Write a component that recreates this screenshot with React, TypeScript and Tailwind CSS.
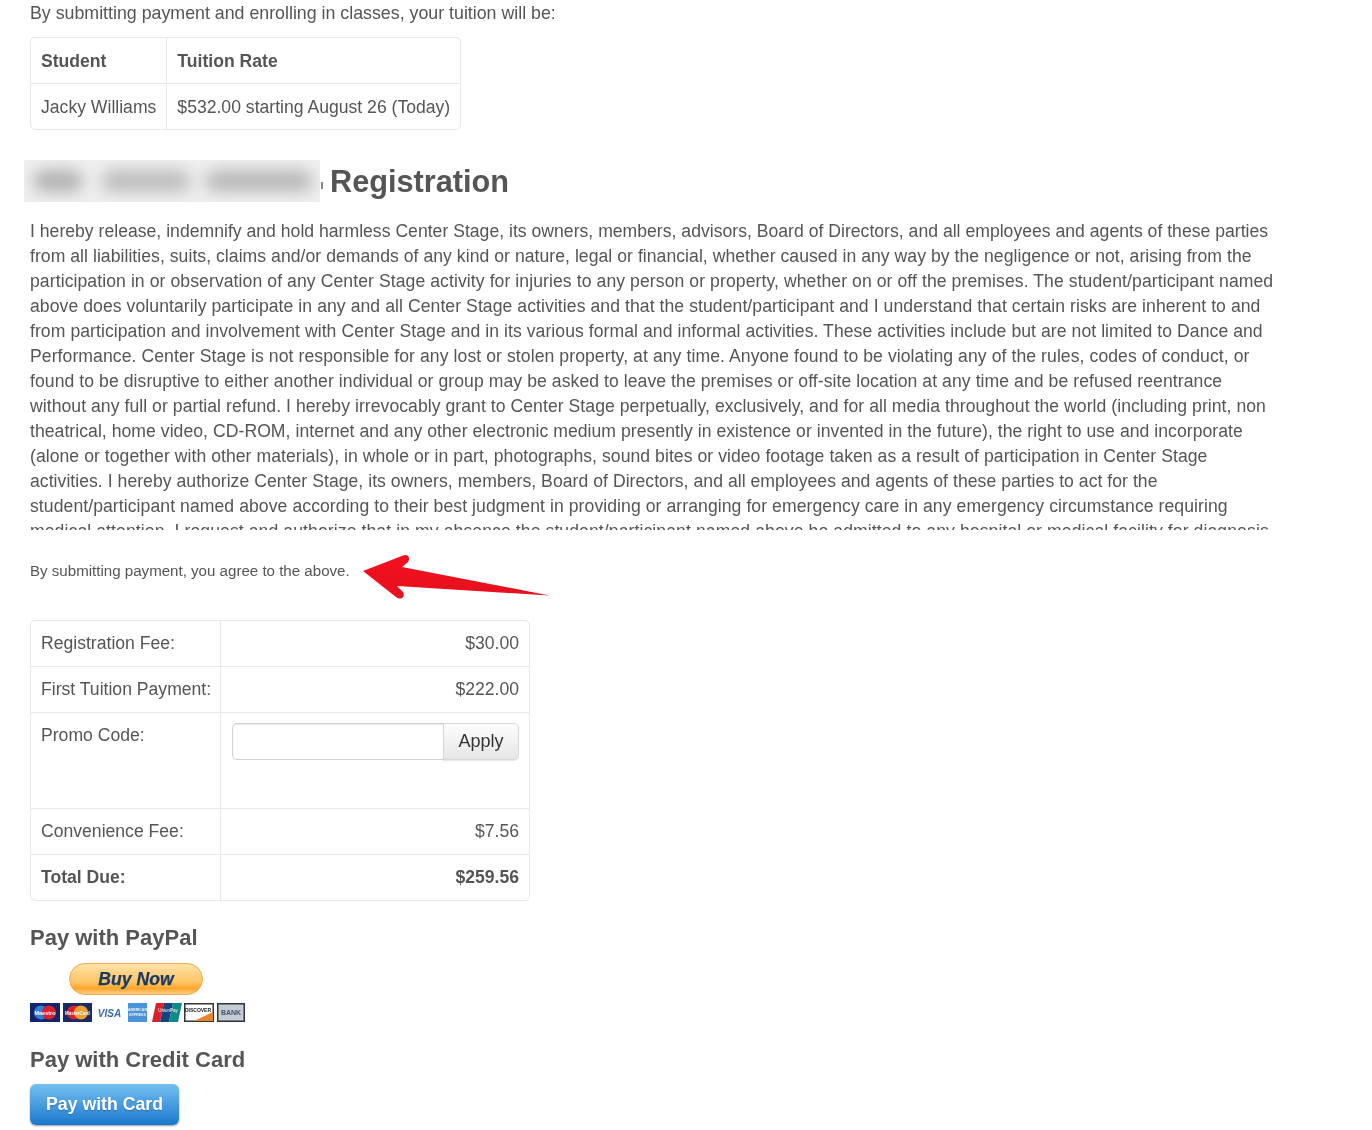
import React from "react";

const lines: [string, string][] = [
  ["I hereby release, indemnify and hold harmless Center Stage, its owners, members, advisors, Board of Directors, and all employees and agents of these parties", "tracking-[0.013px]"],
  ["from all liabilities, suits, claims and/or demands of any kind or nature, legal or financial, whether caused in any way by the negligence or not, arising from the", "tracking-[0.043px]"],
  ["participation in or observation of any Center Stage activity for injuries to any person or property, whether on or off the premises. The student/participant named", "tracking-[0.08px]"],
  ["above does voluntarily participate in any and all Center Stage activities and that the student/participant and I understand that certain risks are inherent to and", "tracking-[0.067px]"],
  ["from participation and involvement with Center Stage and in its various formal and informal activities. These activities include but are not limited to Dance and", "tracking-[0.06px]"],
  ["Performance. Center Stage is not responsible for any lost or stolen property, at any time. Anyone found to be violating any of the rules, codes of conduct, or", "tracking-[0.076px]"],
  ["found to be disruptive to either another individual or group may be asked to leave the premises or off-site location at any time and be refused reentrance", "tracking-[0.065px]"],
  ["without any full or partial refund. I hereby irrevocably grant to Center Stage perpetually, exclusively, and for all media throughout the world (including print, non", "tracking-[0.05px]"],
  ["theatrical, home video, CD-ROM, internet and any other electronic medium presently in existence or invented in the future), the right to use and incorporate", "tracking-[0.045px]"],
  ["(alone or together with other materials), in whole or in part, photographs, sound bites or video footage taken as a result of participation in Center Stage", "tracking-[0.05px]"],
  ["activities. I hereby authorize Center Stage, its owners, members, Board of Directors, and all employees and agents of these parties to act for the", "tracking-[0.04px]"],
  ["student/participant named above according to their best judgment in providing or arranging for emergency care in any emergency circumstance requiring", "tracking-[0.07px]"],
  ["medical attention. I request and authorize that in my absence the student/participant named above be admitted to any hospital or medical facility for diagnosis", "tracking-[0.09px]"],
];

const td = "border-t border-l border-[#e8e8e8] px-[10px] py-[10px] align-top";
const td1 = "border-t border-l border-[#e8e8e8] px-[10px] pt-[11px] pb-[9px] align-top";

function CardIcons() {
  return (
    <div className="flex items-center h-[20px] w-[216px] mt-[7px]">
      <svg width="30" height="19" viewBox="0 0 30 19"><rect width="30" height="19" fill="#12246b"/><circle cx="11" cy="9.5" r="7" fill="#2f7fd6"/><circle cx="19" cy="9.500" r="7" fill="#d8212f"/><text x="15" y="11.500" textAnchor="middle" fontSize="5.500" fontWeight="700" fill="#fff" fontFamily="Liberation Sans">Maestro</text></svg>
      <svg className="ml-[3px]" width="29" height="19" viewBox="0 0 29 19"><rect width="29" height="19" fill="#1a2a62"/><circle cx="11" cy="9.5" r="7" fill="#d8222b"/><circle cx="18" cy="9.5" r="7" fill="#f0a030"/><text x="14.5" y="11.500" textAnchor="middle" fontSize="4.500" fontWeight="700" fill="#fff" fontFamily="Liberation Sans">MasterCard</text></svg>
      <svg className="ml-[5px]" width="25" height="19" viewBox="0 0 25 19"><text x="12.500" y="13.500" textAnchor="middle" fontSize="10" fontWeight="700" fontStyle="italic" fill="#3a6ea8" fontFamily="Liberation Sans">VISA</text></svg>
      <svg className="ml-[6px]" width="19" height="19" viewBox="0 0 19 19"><rect width="19" height="19" fill="#4a93d8"/><text x="9.500" y="8" textAnchor="middle" fontSize="3.500" fontWeight="700" fill="#eef6fd" fontFamily="Liberation Sans">AMERICAN</text><text x="9.500" y="13" textAnchor="middle" fontSize="3.500" fontWeight="700" fill="#eef6fd" fontFamily="Liberation Sans">EXPRESS</text></svg>
      <svg className="ml-[5px]" width="30" height="19" viewBox="0 0 30 19"><path d="M4 0h8l-4 19H0z" fill="#d8222b"/><path d="M12 0h9l-4 19H8z" fill="#17437f"/><path d="M21 0h9l-4 19H17z" fill="#0f8a8a"/><text x="16" y="9" textAnchor="middle" fontSize="4.500" fill="#fff" fontFamily="Liberation Sans">UnionPay</text></svg>
      <svg className="ml-[2px]" width="30" height="19" viewBox="0 0 30 19"><rect x="0.750" y="0.750" width="28.500" height="17.500" fill="#fff" stroke="#333" strokeWidth="1.500"/><path d="M10 18 L29 9 V18 Z" fill="#e8862a"/><text x="14" y="9" textAnchor="middle" fontSize="5" fontWeight="700" fill="#222" fontFamily="Liberation Sans">DISCOVER</text></svg>
      <svg className="ml-[3px]" width="28" height="19" viewBox="0 0 28 19"><rect x="0.750" y="0.750" width="26.500" height="17.500" fill="#c3ccd6" stroke="#333" strokeWidth="1.500"/><text x="14" y="12" textAnchor="middle" fontSize="7" fontWeight="700" fill="#44536b" fontFamily="Liberation Sans">BANK</text></svg>
    </div>
  );
}

export default function App() {
  return (
    <div className="relative w-[1372px] h-[1130px] overflow-hidden bg-white px-[30px] text-[17.6px] leading-[25px] text-[#555] blur-[0.35px] font-['Liberation_Sans',Arial,sans-serif]">
      <p className="whitespace-nowrap text-[17.8px] pt-px">By submitting payment and enrolling in classes, your tuition will be:</p>

      <table className="mt-[11px] border-separate border-spacing-0 rounded-[5px] border-r border-b border-[#e8e8e8] h-[93px] w-[431px]">
        <tbody>
          <tr>
            <td className={`${td1} w-[137px] rounded-tl-[5px] font-bold`}>Student</td>
            <td className={`${td1} rounded-tr-[5px] font-bold`}>Tuition Rate</td>
          </tr>
          <tr>
            <td className={`${td1} rounded-bl-[5px] whitespace-nowrap`}>Jacky Williams</td>
            <td className={`${td1} whitespace-nowrap`}>$532.00 starting August 26 (Today)</td>
          </tr>
        </tbody>
      </table>

      <div className="flex items-center mt-[30px] h-[42px] -ml-[6px]">
        <div className="flex items-center w-[296px] h-[42px] bg-[#f0f0f0] overflow-hidden">
          <div className="ml-[9px] w-[50px] h-[22px] shrink-0 rounded-full bg-[#b0b0b0] blur-[8px]" />
          <div className="ml-[18px] w-[90px] h-[22px] shrink-0 rounded-full bg-[#bcbcbc] blur-[8px]" />
          <div className="ml-[14px] w-[108px] h-[22px] shrink-0 rounded-full bg-[#b8b8b8] blur-[8px]" />
        </div>
        <div className="w-[2px] h-[7px] ml-px mt-[8px] bg-[#888]" />
        <h1 className="ml-[7px] pt-px text-[30.7px] leading-[41px] font-bold text-[#555]">Registration</h1>
      </div>

      <div className="mt-[17px] h-[311px] overflow-hidden whitespace-nowrap">
        {lines.map(([l, t]) => (
          <div key={l} className={t}>{l}</div>
        ))}
      </div>

      <p className="mt-[28px] text-[15.1px] leading-[25px] whitespace-nowrap">By submitting payment, you agree to the above.</p>

      <table className="mt-[37px] border-separate border-spacing-0 rounded-[5px] border-r border-b border-[#e8e8e8] w-[500px] table-fixed">
        <tbody>
          <tr className="h-[46px]">
            <td className={`${td} w-[190px] rounded-tl-[5px]`}>Registration Fee:</td>
            <td className={`${td} rounded-tr-[5px] text-right`}>$30.00</td>
          </tr>
          <tr className="h-[46px]">
            <td className={`${td} whitespace-nowrap`}>First Tuition Payment:</td>
            <td className={`${td} text-right`}>$222.00</td>
          </tr>
          <tr className="h-[96px]">
            <td className={td}>Promo Code:</td>
            <td className={`${td} pl-[11px]`}>
              <div className="flex h-[38px]">
                <input className="w-[212px] h-[37px] rounded-l-[5px] border border-[#d0d0d0] bg-white outline-none shadow-[inset_0_1px_1px_rgba(0,0,0,0.08)]" />
                <button className="w-[76px] h-[37px] -ml-px rounded-r-[5px] border border-[#d8d8d8] bg-gradient-to-b from-[#fdfdfd] to-[#e6e6e6] text-[18px] text-[#333] shadow-[0_1px_1px_rgba(0,0,0,0.1)]">Apply</button>
              </div>
            </td>
          </tr>
          <tr className="h-[46px]">
            <td className={td}>Convenience Fee:</td>
            <td className={`${td} text-right`}>$7.56</td>
          </tr>
          <tr className="h-[46px]">
            <td className={`${td} rounded-bl-[5px] font-bold`}>Total Due:</td>
            <td className={`${td} text-right font-bold`}>$259.56</td>
          </tr>
        </tbody>
      </table>

      <h3 className="mt-[23px] text-[22px] leading-[28px] font-bold">Pay with PayPal</h3>
      <div className="mt-[11px] ml-[39px] w-[134px] h-[32px] rounded-full border border-[#f5aa48] bg-[linear-gradient(to_bottom,#ffe4ae_0%,#ffd58a_25%,#ffc566_60%,#fba62c_82%,#ffcf86_100%)] flex items-center justify-center text-[#1b3a64] text-[17.6px] font-bold italic [-webkit-text-stroke:0.25px_#1b3a64]">Buy Now</div>
      <CardIcons />

      <h3 className="mt-[24px] text-[22px] leading-[28px] font-bold">Pay with Credit Card</h3>
      <button className="block mt-[10px] w-[149px] h-[41px] rounded-[6px] bg-gradient-to-b from-[#72bff0] to-[#1578cc] text-white font-bold text-[17.7px] shadow-[0_1px_2px_rgba(0,0,0,0.4)] [text-shadow:0_1px_1px_rgba(0,0,0,0.25)]">Pay with Card</button>

      <svg className="absolute left-[360px] top-[550px]" width="195" height="52" viewBox="0 0 195 52">
        <defs>
          <linearGradient id="arrowFill" x1="0" y1="0" x2="0" y2="1">
            <stop offset="0" stopColor="#f6101f" />
            <stop offset="1" stopColor="#e4101e" />
          </linearGradient>
        </defs>
        <path d="M3 21 L43 5.500 Q48 4 49 8 Q49.500 11 47 13 L42 17 L189.500 45.500 L37 36 L43 42 Q45 46 42 48 Q39 49.500 36 47 Z" fill="url(#arrowFill)" />
      </svg>
    </div>
  );
}
